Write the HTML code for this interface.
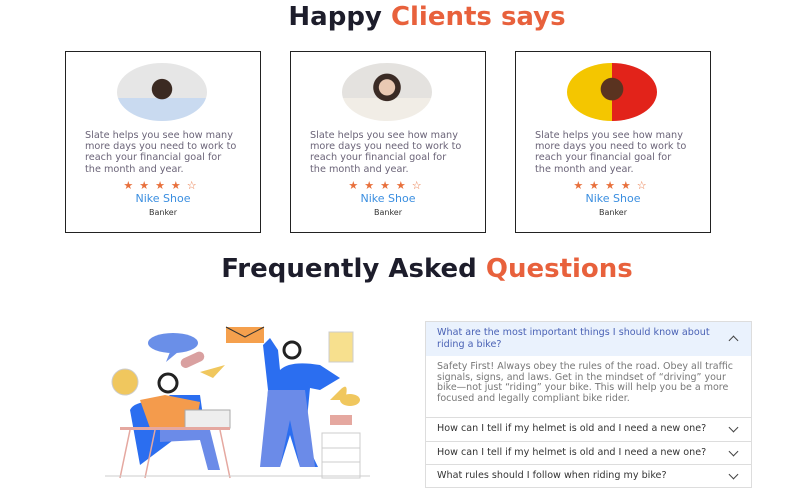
<!DOCTYPE html>
<html><head><meta charset="utf-8"><style>
body{margin:0;width:800px;height:500px;background:#fff;font-family:"DejaVu Sans","Liberation Sans",sans-serif;position:relative;overflow:hidden}
.t{position:absolute;left:27px;width:800px;text-align:center;font-weight:bold;font-size:26px;color:#1d1d2b;white-space:nowrap}
.t span{color:#e8613c}
.card{position:absolute;top:51px;width:196px;height:182px;border:1.5px solid #222;box-sizing:border-box}
.av{position:absolute;left:51px;top:11px;width:90px;height:58px;border-radius:50%;overflow:hidden;background:#ddd}
.q{position:absolute;left:19px;top:78px;font-size:9.7px;line-height:11.2px;color:#6b6478;white-space:nowrap}
.st{position:absolute;top:127px;left:0;width:100%;text-align:center;color:#e8703c;font-size:11px;letter-spacing:6px}
.nm{position:absolute;top:140px;width:100%;text-align:center;color:#3a8ee0;font-size:11px}
.bk{position:absolute;top:156px;width:100%;text-align:center;color:#333;font-size:8px}
.faq{position:absolute;left:425px;top:321px;width:327px;height:167px;border:1px solid #ddd;box-sizing:border-box;font-size:9.6px;white-space:nowrap}
.r{position:absolute;left:0;width:100%;border-top:1px solid #ddd;box-sizing:border-box;padding-left:11px;color:#333}
.ch{position:absolute;right:14px;width:6px;height:6px;border-right:1.2px solid #444;border-bottom:1.2px solid #444;transform:rotate(45deg)}
</style></head><body>
<div class="t" style="top:2px">Happy <span>Clients says</span></div>
<div class="t" style="top:254px">Frequently Asked <span>Questions</span></div>

<div class="card" style="left:65px"><div class="av" style="background:radial-gradient(circle at 50% 45%,#3b2a22 0 18%,transparent 19%),linear-gradient(#e6e6e6 60%,#c9daf0 60%)"></div>
<div class="q">Slate helps you see how many<br>more days you need to work to<br>reach your financial goal for<br>the month and year.</div>
<div class="st">★★★★☆</div><div class="nm">Nike Shoe</div><div class="bk">Banker</div></div>
<div class="card" style="left:290px"><div class="av" style="background:radial-gradient(circle at 50% 42%,#e9c9b3 0 14%,#3a2b25 15% 24%,transparent 25%),linear-gradient(#e4e2df 60%,#f1ede6 60%)"></div>
<div class="q">Slate helps you see how many<br>more days you need to work to<br>reach your financial goal for<br>the month and year.</div>
<div class="st">★★★★☆</div><div class="nm">Nike Shoe</div><div class="bk">Banker</div></div>
<div class="card" style="left:515px"><div class="av" style="background:radial-gradient(circle at 50% 45%,#5a3320 0 20%,transparent 21%),linear-gradient(90deg,#f4c600 50%,#e2231a 50%)"></div>
<div class="q">Slate helps you see how many<br>more days you need to work to<br>reach your financial goal for<br>the month and year.</div>
<div class="st">★★★★☆</div><div class="nm">Nike Shoe</div><div class="bk">Banker</div></div>

<svg style="position:absolute;left:100px;top:310px" width="280" height="180" viewBox="0 0 280 180">
<ellipse cx="73" cy="33" rx="25" ry="10" fill="#6a8fe8"/>
<path d="M70 42 L66 52 L78 42Z" fill="#6a8fe8"/>
<rect x="80" y="45" width="25" height="10" rx="5" fill="#d9a0a0" transform="rotate(-25 92 50)"/>
<circle cx="25" cy="72" r="13" fill="#f0c75e" stroke="#ccc"/>
<rect x="126" y="17" width="38" height="16" fill="#f5a04d"/>
<path d="M126 17 L145 27 L164 17" fill="none" stroke="#333"/>
<rect x="229" y="22" width="24" height="30" fill="#f7e08e" stroke="#ccc"/>
<path d="M100 62 L125 55 L113 68Z" fill="#f0c75e"/>
<path d="M40 155 L30 100 Q35 90 60 92 L70 85 L100 85 L105 120 L80 125 Z" fill="#2b6ef0"/>
<path d="M40 90 L65 85 L100 92 L95 118 L50 118Z" fill="#f49b4c"/>
<circle cx="68" cy="73" r="9" fill="#fff" stroke="#222" stroke-width="3"/>
<path d="M60 120 L110 120 L120 160 L108 160 L100 130 L60 132Z" fill="#6b8be8"/>
<rect x="85" y="100" width="45" height="18" fill="#eee" stroke="#aaa"/>
<rect x="20" y="117" width="110" height="3" fill="#e5a8a0"/>
<path d="M30 120 L20 168 M120 120 L130 168 M55 120 L45 168" stroke="#e5a8a0" stroke-width="1.5"/>
<path d="M163 35 L170 28 L178 40 L180 60 Q190 50 220 55 L240 68 L220 80 L210 78 L205 130 L218 157 L200 157 L190 125 L180 157 L162 157 L168 80 Z" fill="#2b6ef0"/>
<path d="M168 80 L205 80 L215 157 L200 157 L190 110 L180 157 L160 157Z" fill="#6b8be8"/>
<circle cx="192" cy="40" r="8" fill="#fff" stroke="#222" stroke-width="3"/>
<path d="M240 80 Q250 70 245 90 L230 90Z" fill="#f0c75e"/>
<ellipse cx="250" cy="90" rx="10" ry="6" fill="#f0c75e"/>
<rect x="230" y="105" width="22" height="10" fill="#e5a8a0"/>
<rect x="222" y="123" width="38" height="45" fill="#fff" stroke="#ccc"/>
<path d="M222 138 H260 M222 152 H260" stroke="#ccc"/>
<line x1="5" y1="166" x2="270" y2="166" stroke="#ccc"/>
</svg>

<div class="faq">
<div style="position:absolute;left:0;top:0;width:100%;height:34px;background:#eaf2fd"></div>
<div style="position:absolute;left:11px;top:5px;color:#4a62b5;line-height:11.5px">What are the most important things I should know about<br>riding a bike?</div>
<div class="ch" style="top:15px;transform:rotate(225deg)"></div>
<div style="position:absolute;left:11px;top:40px;color:#777;line-height:10.6px;font-size:9.5px">Safety First! Always obey the rules of the road. Obey all traffic<br>signals, signs, and laws. Get in the mindset of “driving” your<br>bike—not just “riding” your bike. This will help you be a more<br>focused and legally compliant bike rider.</div>
<div class="r" style="top:95px;height:24px;line-height:22px">How can I tell if my helmet is old and I need a new one?<div class="ch" style="top:6px"></div></div>
<div class="r" style="top:119px;height:24px;line-height:22px">How can I tell if my helmet is old and I need a new one?<div class="ch" style="top:6px"></div></div>
<div class="r" style="top:142px;height:24px;line-height:22px">What rules should I follow when riding my bike?<div class="ch" style="top:6px"></div></div>
</div>
</body></html>
